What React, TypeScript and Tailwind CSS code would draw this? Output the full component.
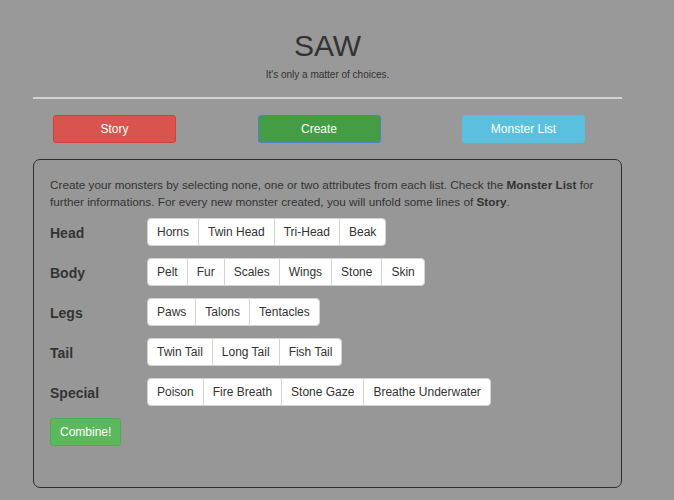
const attributes: { label: string; options: string[] }[] = [
  { label: "Head", options: ["Horns", "Twin Head", "Tri-Head", "Beak"] },
  { label: "Body", options: ["Pelt", "Fur", "Scales", "Wings", "Stone", "Skin"] },
  { label: "Legs", options: ["Paws", "Talons", "Tentacles"] },
  { label: "Tail", options: ["Twin Tail", "Long Tail", "Fish Tail"] },
  { label: "Special", options: ["Poison", "Fire Breath", "Stone Gaze", "Breathe Underwater"] },
];

function OptionGroup({ options }: { options: string[] }) {
  return (
    <div className="flex">
      {options.map((o, i) => (
        <button
          key={o}
          type="button"
          className={`h-[28px] px-[9px] bg-white text-[12px] text-[#333] border border-[#d4d4d4] ${
            i === 0 ? "rounded-l-[4px]" : "-ml-px"
          } ${i === options.length - 1 ? "rounded-r-[4px]" : ""}`}
        >
          {o}
        </button>
      ))}
    </div>
  );
}

export default function App() {
  return (
    <div
      className="min-h-[500px] bg-[#999999] text-[#333]"
      style={{ fontFamily: '"Liberation Sans", Arial, sans-serif' }}
    >
      <div className="ml-[33px] w-[589px] pt-[29px]">
        <h1 className="text-center text-[30px] leading-[33px] text-[#333]">SAW</h1>
        <p className="text-center text-[10px] leading-[14px] mt-[6px] text-[#333]">
          It's only a matter of choices.
        </p>
        <div className="mt-[15px] border-t-2 border-[#d2d2d2]" />
        <div className="flex justify-between pl-[20px] pr-[37px] mt-[16px]">
          <button
            type="button"
            className="w-[123px] h-[28px] rounded-[3px] bg-[#d9534f] border border-[#d43f3a] text-white text-[12px]"
          >
            Story
          </button>
          <button
            type="button"
            className="w-[123px] h-[28px] rounded-[3px] bg-[#449d44] border border-[#4a86b8] text-white text-[12px]"
          >
            Create
          </button>
          <button
            type="button"
            className="w-[123px] h-[28px] rounded-[3px] bg-[#5bc0de] border border-[#5bc0de] text-white text-[12px]"
          >
            Monster List
          </button>
        </div>
        <div className="mt-[16px] h-[329px] border border-[#2e2e2e] rounded-[7px] bg-[#979797] px-[16px] pt-[16px]">
          <p className="text-[11.75px] leading-[17px] text-[#333]">
            Create your monsters by selecting none, one or two attributes from each list. Check the{" "}
            <b>Monster List</b> for further informations. For every new monster created, you will unfold
            some lines of <b>Story</b>.
          </p>
          <div className="mt-[8px] flex flex-col gap-[12px]">
            {attributes.map((a) => (
              <div key={a.label} className="flex items-center">
                <div className="w-[97px] text-[14px] font-bold text-[#333] pt-[2px]">{a.label}</div>
                <OptionGroup options={a.options} />
              </div>
            ))}
          </div>
          <button
            type="button"
            className="mt-[12px] h-[28px] px-[9px] rounded-[3px] bg-[#5cb85c] border border-[#4cae4c] text-white text-[12px]"
          >
            Combine!
          </button>
        </div>
      </div>
    </div>
  );
}
